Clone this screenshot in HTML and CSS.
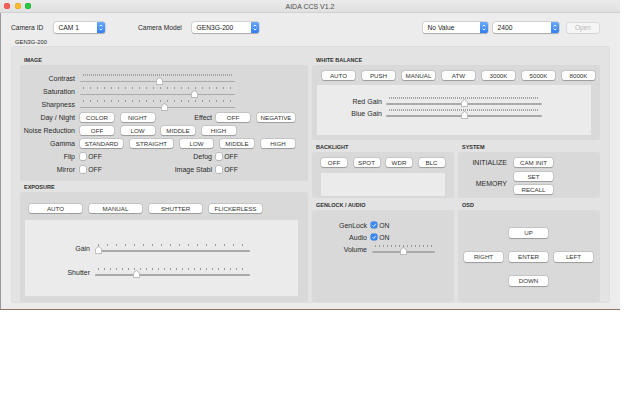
FILE: index.html
```html
<!DOCTYPE html>
<html>
<head>
<meta charset="utf-8">
<title>AIDA CCS V1.2</title>
<link rel="stylesheet" href="styles.css">
</head>
<body>
<div class="window">
  <div class="titlebar">
    <div class="lights"><span class="light red"></span><span class="light yellow"></span><span class="light green"></span></div>
    <div class="title">AIDA CCS V1.2</div>
    <div></div>
  </div>

  <div class="toolbar">
    <span class="tlabel w-camid">Camera ID</span>
    <div class="select sel-cam"><span class="seltext">CAM 1</span><span class="stepper"><svg viewBox="0 0 8 11" width="8" height="11"><path d="M2.6 4.4 L4 3 L5.4 4.4 M2.6 6.6 L4 8 L5.4 6.6" fill="none" stroke="#fff" stroke-width="0.9"/></svg></span></div>
    <span class="tlabel w-cammodel">Camera Model</span>
    <div class="select sel-model"><span class="seltext">GEN3G-200</span><span class="stepper"><svg viewBox="0 0 8 11" width="8" height="11"><path d="M2.6 4.4 L4 3 L5.4 4.4 M2.6 6.6 L4 8 L5.4 6.6" fill="none" stroke="#fff" stroke-width="0.9"/></svg></span></div>
    <div class="spacer"></div>
    <div class="select sel-nv"><span class="seltext">No Value</span><span class="stepper"><svg viewBox="0 0 8 11" width="8" height="11"><path d="M2.6 4.4 L4 3 L5.4 4.4 M2.6 6.6 L4 8 L5.4 6.6" fill="none" stroke="#fff" stroke-width="0.9"/></svg></span></div>
    <div class="select sel-baud"><span class="seltext">2400</span><span class="stepper"><svg viewBox="0 0 8 11" width="8" height="11"><path d="M2.6 4.4 L4 3 L5.4 4.4 M2.6 6.6 L4 8 L5.4 6.6" fill="none" stroke="#fff" stroke-width="0.9"/></svg></span></div>
    <div class="open">Open</div>
  </div>

  <div class="grouplabel">GEN3G-200</div>

  <div class="group">
    <!-- LEFT COLUMN -->
    <div class="col">
      <div class="stitle h11">IMAGE</div>
      <div class="panel p-image">
        <div class="row">
          <span class="lbl">Contrast</span>
          <div class="slider w155"><div class="ticks t-dense"></div><div class="track"></div><svg class="thumb" style="left:76px" viewBox="0 0 14 16"><path d="M2 15.2 H12 A1.3 1.3 0 0 0 13.3 13.9 V6.4 L7 0.8 L0.7 6.4 V13.9 A1.3 1.3 0 0 0 2 15.2 Z" fill="#fff" stroke="#949494" stroke-width="0.9"/></svg></div>
        </div>
        <div class="row">
          <span class="lbl">Saturation</span>
          <div class="slider w155"><div class="ticks t-75"></div><div class="track"></div><svg class="thumb" style="left:110.5px" viewBox="0 0 14 16"><path d="M2 15.2 H12 A1.3 1.3 0 0 0 13.3 13.9 V6.4 L7 0.8 L0.7 6.4 V13.9 A1.3 1.3 0 0 0 2 15.2 Z" fill="#fff" stroke="#949494" stroke-width="0.9"/></svg></div>
        </div>
        <div class="row">
          <span class="lbl">Sharpness</span>
          <div class="slider w155"><div class="ticks t-75"></div><div class="track"></div><svg class="thumb" style="left:81px" viewBox="0 0 14 16"><path d="M2 15.2 H12 A1.3 1.3 0 0 0 13.3 13.9 V6.4 L7 0.8 L0.7 6.4 V13.9 A1.3 1.3 0 0 0 2 15.2 Z" fill="#fff" stroke="#949494" stroke-width="0.9"/></svg></div>
        </div>
        <div class="row">
          <span class="lbl">Day / Night</span>
          <div class="partA">
            <span class="btn w34">COLOR</span><span class="btn w34">NIGHT</span>
            <span class="lbl2">Effect</span>
          </div>
          <div class="partB">
            <span class="btn w34">OFF</span><span class="btn w38">NEGATIVE</span>
          </div>
        </div>
        <div class="row">
          <span class="lbl">Noise Reduction</span>
          <div class="btns g65">
            <span class="btn w34">OFF</span><span class="btn w34">LOW</span><span class="btn w34">MIDDLE</span><span class="btn w34">HIGH</span>
          </div>
        </div>
        <div class="row">
          <span class="lbl">Gamma</span>
          <div class="btns g7">
            <span class="btn w43">STANDARD</span><span class="btn w43">STRAIGHT</span><span class="btn w33">LOW</span><span class="btn w34">MIDDLE</span><span class="btn w34">HIGH</span>
          </div>
        </div>
        <div class="row">
          <span class="lbl">Flip</span>
          <div class="partA">
            <span class="chk"></span><span class="chktext">OFF</span>
            <span class="lbl2">Defog</span>
          </div>
          <div class="partB">
            <span class="chk"></span><span class="chktext">OFF</span>
          </div>
        </div>
        <div class="row">
          <span class="lbl">Mirror</span>
          <div class="partA">
            <span class="chk"></span><span class="chktext">OFF</span>
            <span class="lbl2">Image Stabl</span>
          </div>
          <div class="partB">
            <span class="chk"></span><span class="chktext">OFF</span>
          </div>
        </div>
      </div>

      <div class="stitle h11">EXPOSURE</div>
      <div class="panel p-exposure">
        <div class="btns g7 exp-btns">
          <span class="btn w53">AUTO</span><span class="btn w53">MANUAL</span><span class="btn w53">SHUTTER</span><span class="btn w53">FLICKERLESS</span>
        </div>
        <div class="inner exp-inner">
          <div class="irow">
            <span class="lbl lw65">Gain</span>
            <div class="slider w155"><div class="ticks t-gain"></div><div class="track"></div><svg class="thumb" style="left:0px" viewBox="0 0 14 16"><path d="M2 15.2 H12 A1.3 1.3 0 0 0 13.3 13.9 V6.4 L7 0.8 L0.7 6.4 V13.9 A1.3 1.3 0 0 0 2 15.2 Z" fill="#fff" stroke="#949494" stroke-width="0.9"/></svg></div>
          </div>
          <div class="irow">
            <span class="lbl lw65">Shutter</span>
            <div class="slider w155"><div class="ticks t-shut"></div><div class="track"></div><svg class="thumb" style="left:38px" viewBox="0 0 14 16"><path d="M2 15.2 H12 A1.3 1.3 0 0 0 13.3 13.9 V6.4 L7 0.8 L0.7 6.4 V13.9 A1.3 1.3 0 0 0 2 15.2 Z" fill="#fff" stroke="#949494" stroke-width="0.9"/></svg></div>
          </div>
        </div>
      </div>
    </div>

    <!-- RIGHT COLUMN -->
    <div class="col">
      <div class="stitle h11">WHITE BALANCE</div>
      <div class="panel p-wb">
        <div class="btns g7 wb-btns">
          <span class="btn w33">AUTO</span><span class="btn w33">PUSH</span><span class="btn w33">MANUAL</span><span class="btn w33">ATW</span><span class="btn w33">3000K</span><span class="btn w33">5000K</span><span class="btn w33">8000K</span>
        </div>
        <div class="inner wb-inner">
          <div class="wrow">
            <span class="lbl lw65 mr4">Red Gain</span>
            <div class="slider w156"><div class="ticks t-dense"></div><div class="track"></div><svg class="thumb" style="left:75px" viewBox="0 0 14 16"><path d="M2 15.2 H12 A1.3 1.3 0 0 0 13.3 13.9 V6.4 L7 0.8 L0.7 6.4 V13.9 A1.3 1.3 0 0 0 2 15.2 Z" fill="#fff" stroke="#949494" stroke-width="0.9"/></svg></div>
          </div>
          <div class="wrow">
            <span class="lbl lw65 mr4">Blue Gain</span>
            <div class="slider w156"><div class="ticks t-dense"></div><div class="track"></div><svg class="thumb" style="left:75px" viewBox="0 0 14 16"><path d="M2 15.2 H12 A1.3 1.3 0 0 0 13.3 13.9 V6.4 L7 0.8 L0.7 6.4 V13.9 A1.3 1.3 0 0 0 2 15.2 Z" fill="#fff" stroke="#949494" stroke-width="0.9"/></svg></div>
          </div>
        </div>
      </div>

      <div class="pair">
        <div class="half">
          <div class="stitle h12">BACKLIGHT</div>
          <div class="panel p-back">
            <div class="btns g65">
              <span class="btn w26">OFF</span><span class="btn w26">SPOT</span><span class="btn w26">WDR</span><span class="btn w26">BLC</span>
            </div>
            <div class="inner back-inner"></div>
          </div>
        </div>
        <div class="half">
          <div class="stitle h12">SYSTEM</div>
          <div class="panel p-sys">
            <div class="sysrow">
              <span class="lbl lw49">INITIALIZE</span>
              <span class="btn w39">CAM INIT</span>
            </div>
            <div class="sysrow">
              <span class="lbl lw49">MEMORY</span>
              <div class="stack">
                <span class="btn w39">SET</span>
                <span class="btn w39">RECALL</span>
              </div>
            </div>
          </div>
        </div>
      </div>

      <div class="pair">
        <div class="half">
          <div class="stitle h12">GENLOCK / AUDIO</div>
          <div class="panel p-gen">
            <div class="grow">
              <span class="lbl lw55 mr4">GenLock</span>
              <span class="chk on"><svg viewBox="0 0 7 7" width="7" height="7"><path d="M1.8 3.7 L3 4.9 L5.3 2" fill="none" stroke="#fff" stroke-width="0.9"/></svg></span><span class="chktext">ON</span>
            </div>
            <div class="grow">
              <span class="lbl lw55 mr4">Audio</span>
              <span class="chk on"><svg viewBox="0 0 7 7" width="7" height="7"><path d="M1.8 3.7 L3 4.9 L5.3 2" fill="none" stroke="#fff" stroke-width="0.9"/></svg></span><span class="chktext">ON</span>
            </div>
            <div class="grow">
              <span class="lbl lw55 mr5">Volume</span>
              <div class="slider w63"><div class="ticks t-vol"></div><div class="track"></div><svg class="thumb" style="left:28px" viewBox="0 0 14 16"><path d="M2 15.2 H12 A1.3 1.3 0 0 0 13.3 13.9 V6.4 L7 0.8 L0.7 6.4 V13.9 A1.3 1.3 0 0 0 2 15.2 Z" fill="#fff" stroke="#949494" stroke-width="0.9"/></svg></div>
            </div>
          </div>
        </div>
        <div class="half">
          <div class="stitle h12">OSD</div>
          <div class="panel p-osd">
            <span class="btn w39 osd-up">UP</span>
            <span class="btn w39 osd-right">RIGHT</span>
            <span class="btn w39 osd-enter">ENTER</span>
            <span class="btn w39 osd-left">LEFT</span>
            <span class="btn w39 osd-down">DOWN</span>
          </div>
        </div>
      </div>
    </div>
  </div>
</div>
</body>
</html>
```

FILE: styles.css
```css
* { box-sizing: border-box; }

body {
  margin: 0;
  background: #ffffff;
  font-family: "Liberation Sans", Arial, Helvetica, sans-serif;
  color: #262626;
}

.window {
  width: 620px;
  height: 310px;
  background: #ececec;
  border-bottom: 1px solid #8b735f;
  box-shadow: inset 1px 0 0 #9a979c;
  display: flex;
  flex-direction: column;
}

/* title bar */
.titlebar {
  height: 13px;
  flex: none;
  display: grid;
  grid-template-columns: 1fr auto 1fr;
  align-items: center;
  background: linear-gradient(#ebebeb, #e0e0e0);
  border-bottom: 1px solid #d0d0d0;
}
.lights { display: flex; gap: 4.45px; padding-left: 4.3px; }
.light { width: 6px; height: 6px; border-radius: 50%; }
.red { background: #fc5f57; box-shadow: inset 0 0 0 0.5px #e0443e; }
.yellow { background: #fdbc2e; box-shadow: inset 0 0 0 0.5px #dea123; }
.green { background: #29c840; box-shadow: inset 0 0 0 0.5px #1aab29; }
.title { font-size: 7px; color: #4d4d4d; }

/* toolbar */
.toolbar {
  height: 20px;
  flex: none;
  padding: 9px 21px 0 11px;
  display: flex;
  align-items: flex-start;
}
.tlabel { font-size: 6.7px; line-height: 11px; color: #2a2a2a; white-space: nowrap; }
.w-camid { width: 43px; }
.w-cammodel { width: 54px; margin-left: 33px; }
.spacer { flex: 1; }

.select {
  height: 11px;
  display: flex;
  background: #fff;
  border-radius: 2px;
  box-shadow: 0 0 0 0.5px rgba(0,0,0,0.18), 0 0.6px 1px rgba(0,0,0,0.2);
  font-size: 6.7px;
  line-height: 11px;
  color: #222;
}
.seltext { flex: 1; padding-left: 4.5px; white-space: nowrap; overflow: hidden; }
.stepper {
  flex: none;
  width: 8.5px;
  height: 11px;
  border-radius: 0 2px 2px 0;
  background: linear-gradient(#6aaafa, #2f7ff5);
  display: flex;
  align-items: center;
  justify-content: center;
}
.stepper svg { display: block; }
.sel-cam { width: 51px; }
.sel-model { width: 67px; }
.sel-nv { width: 65px; }
.sel-baud { width: 66px; margin-left: 5px; }
.open {
  width: 32px;
  height: 10px;
  margin: 1px 0 0 8px;
  border-radius: 2px;
  background: #f5f5f5;
  box-shadow: 0 0 0 0.5px rgba(0,0,0,0.14), 0 0.5px 0.5px rgba(0,0,0,0.08);
  color: #b8b8b8;
  font-size: 6.5px;
  line-height: 10px;
  text-align: center;
}

.grouplabel {
  height: 13px;
  flex: none;
  padding: 6px 0 0 15px;
  font-size: 5.8px;
  line-height: 7px;
  color: #2a2a2a;
}

/* main group box */
.group {
  margin-left: 11px;
  width: 599px;
  height: 257px;
  flex: none;
  background: #e3e3e3;
  border-radius: 3px;
  box-shadow: inset 0 0 0 0.5px rgba(0,0,0,0.04);
  padding: 8px 10px 0 9px;
  display: flex;
  gap: 4px;
}
.col { width: 288px; display: flex; flex-direction: column; }
.pair { display: flex; gap: 4px; }
.half { width: 142px; display: flex; flex-direction: column; }

.stitle {
  flex: none;
  display: flex;
  align-items: flex-end;
  padding: 0 0 1px 4px;
  font-size: 5.5px;
  font-weight: bold;
  line-height: 7px;
  color: #2e2e2e;
  white-space: nowrap;
}
.h11 { height: 11px; }
.h12 { height: 12px; }

.panel { flex: none; background: #d9d9d9; border-radius: 3px; }
.inner { background: #ebebeb; border-radius: 1px; }

/* labels */
.lbl {
  flex: none;
  width: 55px;
  margin-right: 5px;
  text-align: right;
  font-size: 7px;
  line-height: 9px;
  color: #2a2a2a;
  white-space: nowrap;
}
.lw65 { width: 65px; }
.lw55 { width: 55px; }
.lw49 { width: 49px; margin-right: 7px; }
.mr4 { margin-right: 4px; }
.mr5 { margin-right: 5px; }
.lbl2 {
  margin-left: auto;
  font-size: 7px;
  line-height: 9px;
  color: #2a2a2a;
  white-space: nowrap;
}

/* buttons */
.btn {
  flex: none;
  display: block;
  height: 9px;
  background: #fff;
  border-radius: 2px;
  box-shadow: 0 0 0 0.5px rgba(0,0,0,0.16), 0 0.6px 0.8px rgba(0,0,0,0.22);
  font-size: 6.2px;
  line-height: 9px;
  text-align: center;
  color: #333;
  white-space: nowrap;
}
.w26 { width: 26px; }
.w33 { width: 33px; }
.w34 { width: 34px; }
.w38 { width: 38px; }
.w39 { width: 39px; }
.w43 { width: 43px; }
.w53 { width: 53px; }
.btns { display: flex; }
.g7 { gap: 7px; }
.g65 { gap: 6.5px; }

/* checkboxes */
.chk {
  flex: none;
  width: 6.4px;
  height: 6.4px;
  background: #fff;
  border-radius: 1.5px;
  box-shadow: 0 0 0 0.5px rgba(0,0,0,0.25), 0 0.5px 0.5px rgba(0,0,0,0.1);
  display: flex;
  align-items: center;
  justify-content: center;
}
.chk.on { background: #3b89f7; box-shadow: 0 0 0 0.5px #2f74d8; }
.chk svg { display: block; width: 6.4px; height: 6.4px; }
.chktext { margin-left: 1.8px; font-size: 6.8px; line-height: 9px; color: #2a2a2a; }

/* sliders */
.slider { position: relative; flex: none; height: 11px; }
.w155 { width: 155px; }
.w156 { width: 156px; }
.w63 { width: 63px; }
.ticks { position: absolute; left: 3px; right: 3px; top: 1px; height: 2px; }
.t-dense { background: repeating-linear-gradient(90deg, #a3a3a3 0 1px, transparent 1px 2px); }
.t-75 { background: repeating-linear-gradient(90deg, #999 0 1px, transparent 1px 7px); }
.t-gain { background: repeating-linear-gradient(90deg, #999 0 1px, transparent 1px 9px); }
.t-shut { background: repeating-linear-gradient(90deg, #999 0 1px, transparent 1px 6px); }
.t-vol { background: repeating-linear-gradient(90deg, #999 0 1px, transparent 1px 4px); }
.track {
  position: absolute;
  left: 0; right: 0;
  top: 7.5px;
  height: 1.5px;
  border-radius: 1px;
  background: #a9a9a9;
}
.thumb {
  position: absolute;
  top: 3.5px;
  width: 7px;
  height: 8px;
  filter: drop-shadow(0 0.5px 0.6px rgba(0,0,0,0.3));
}

/* IMAGE */
.p-image { height: 116px; padding-top: 7px; }
.row { height: 13px; display: flex; align-items: center; }
.partA { width: 132px; display: flex; align-items: center; gap: 6.5px; }
.partA .chktext { margin-left: -4.7px; }
.partB { margin-left: 4px; display: flex; align-items: center; gap: 7px; }
.partB .chktext { margin-left: -5.2px; }

/* EXPOSURE */
.p-exposure { height: 110px; padding: 12px 5px 0 5px; }
.exp-btns { padding-left: 4px; }
.exp-inner { margin-top: 7px; width: 273px; height: 76px; padding-top: 22px; display: flex; flex-direction: column; gap: 12px; }
.irow { height: 12px; display: flex; align-items: center; }

/* WHITE BALANCE */
.p-wb { height: 75px; padding: 6px 5px 0 5px; }
.wb-btns { padding-left: 5px; }
.wb-inner { margin-top: 5px; width: 274px; height: 50px; padding-top: 10px; }
.wrow { height: 12px; display: flex; align-items: center; }

/* BACKLIGHT */
.p-back { height: 46px; padding: 6px 9px 0 9px; }
.back-inner { margin-top: 6px; width: 124px; height: 23px; }

/* SYSTEM */
.p-sys { height: 46px; padding-top: 6px; display: flex; flex-direction: column; gap: 5px; }
.sysrow { display: flex; align-items: center; }
.stack { display: flex; flex-direction: column; gap: 4px; }

/* GENLOCK */
.p-gen { height: 92px; padding-top: 9px; }
.grow { height: 12px; display: flex; align-items: center; }

/* OSD */
.p-osd {
  height: 92px;
  padding: 18px 0 0 6px;
  display: grid;
  grid-template-columns: 39px 39px 39px;
  grid-template-rows: 10px 10px 10px;
  column-gap: 6px;
  row-gap: 14px;
  align-content: start;
}
.p-osd .btn { height: 9.5px; line-height: 9.5px; }
.osd-up { grid-column: 2; grid-row: 1; }
.osd-right { grid-column: 1; grid-row: 2; }
.osd-enter { grid-column: 2; grid-row: 2; }
.osd-left { grid-column: 3; grid-row: 2; }
.osd-down { grid-column: 2; grid-row: 3; }
```
